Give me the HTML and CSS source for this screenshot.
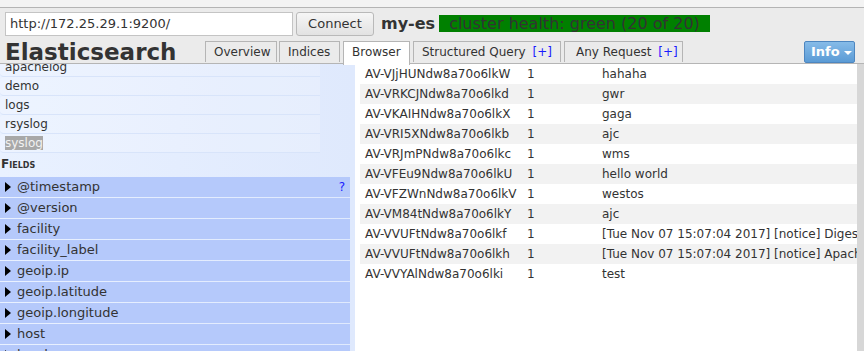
FILE: index.html
```html
<!DOCTYPE html>
<html lang="en">
<head>
  <meta charset="UTF-8">
  <link rel="stylesheet" href="styles.css">
  <title>Elasticsearch head</title>
</head>
<body>
  <div class="topstrip"></div>

  <!-- 상단 연결 바 -->
  <div class="header">
    <div class="connect-row">
      <input class="url" type="text" value="http://172.25.29.1:9200/">
      <button class="connect">Connect</button>
      <span class="cluster-name">my-es</span>
      <span class="health">cluster health: green (20 of 20)</span>
    </div>
    <div class="tab-row">
      <h1 class="logo">Elasticsearch</h1>
      <div class="tabs">
        <div class="tab tab-overview">Overview</div>
        <div class="tab tab-indices">Indices</div>
        <div class="tab tab-browser active">Browser</div>
        <div class="tab tab-query">Structured Query <span class="plus">[+]</span></div>
        <div class="tab tab-request">Any Request <span class="plus">[+]</span></div>
      </div>
      <div class="info">Info <span class="caret"></span></div>
    </div>
  </div>

  <div class="main">
    <!-- 왼쪽 인덱스 / 필드 목록 -->
    <div class="side">
      <div class="side-inner">
        <div class="idx">apachelog</div>
        <div class="idx">demo</div>
        <div class="idx">logs</div>
        <div class="idx">rsyslog</div>
        <div class="idx"><span class="sel">syslog</span></div>
        <div class="fields-title">Fields</div>
        <div class="field"><span class="tri"></span>@timestamp<span class="help">?</span></div>
        <div class="field"><span class="tri"></span>@version</div>
        <div class="field"><span class="tri"></span>facility</div>
        <div class="field"><span class="tri"></span>facility_label</div>
        <div class="field"><span class="tri"></span>geoip.ip</div>
        <div class="field"><span class="tri"></span>geoip.latitude</div>
        <div class="field"><span class="tri"></span>geoip.longitude</div>
        <div class="field"><span class="tri"></span>host</div>
        <div class="field"><span class="tri"></span>level</div>
      </div>
    </div>

    <!-- 문서 결과 목록 -->
    <div class="results">
      <div class="doc"><span class="c-id">AV-VJjHUNdw8a70o6lkW</span><span class="c-ver">1</span><span>hahaha</span></div>
      <div class="doc"><span class="c-id">AV-VRKCJNdw8a70o6lkd</span><span class="c-ver">1</span><span>gwr</span></div>
      <div class="doc"><span class="c-id">AV-VKAIHNdw8a70o6lkX</span><span class="c-ver">1</span><span>gaga</span></div>
      <div class="doc"><span class="c-id">AV-VRI5XNdw8a70o6lkb</span><span class="c-ver">1</span><span>ajc</span></div>
      <div class="doc"><span class="c-id">AV-VRJmPNdw8a70o6lkc</span><span class="c-ver">1</span><span>wms</span></div>
      <div class="doc"><span class="c-id">AV-VFEu9Ndw8a70o6lkU</span><span class="c-ver">1</span><span>hello world</span></div>
      <div class="doc"><span class="c-id">AV-VFZWnNdw8a70o6lkV</span><span class="c-ver">1</span><span>westos</span></div>
      <div class="doc"><span class="c-id">AV-VM84tNdw8a70o6lkY</span><span class="c-ver">1</span><span>ajc</span></div>
      <div class="doc"><span class="c-id">AV-VVUFtNdw8a70o6lkf</span><span class="c-ver">1</span><span>[Tue Nov 07 15:07:04 2017] [notice] Digest: generating secret for digest authentication ...</span></div>
      <div class="doc"><span class="c-id">AV-VVUFtNdw8a70o6lkh</span><span class="c-ver">1</span><span>[Tue Nov 07 15:07:04 2017] [notice] Apache/2.2.15 (Unix) DAV/2 configured</span></div>
      <div class="doc"><span class="c-id">AV-VVYAlNdw8a70o6lki</span><span class="c-ver">1</span><span>test</span></div>
    </div>
    <div class="scrollbar"></div>
  </div>
</body>
</html>
```

FILE: styles.css
```css
body {
  margin: 0;
  font-family: "DejaVu Sans", Verdana, sans-serif;
  color: #333;
  height: 351px;
  overflow: hidden;
  background: #ebebeb;
}

.topstrip {
  height: 7px;
  background: #f3f3f3;
  border-bottom: 1px solid #b4b4b4;
}

.header {
  background: #ebebeb;
}

.connect-row {
  display: flex;
  align-items: center;
  height: 31px;
  padding-left: 5px;
}

.url {
  box-sizing: border-box;
  width: 288px;
  height: 24px;
  margin: 0;
  padding: 0 4px;
  border: 1px solid #c4c4c4;
  font-family: "DejaVu Sans", sans-serif;
  font-size: 13px;
  color: #333;
  background: #fff;
}

.connect {
  box-sizing: border-box;
  width: 78px;
  height: 24px;
  margin: 0 0 0 3px;
  border: 1px solid #b9b9b9;
  border-radius: 3px;
  background: linear-gradient(#f6f6f6, #e2e2e2);
  font-family: "DejaVu Sans", sans-serif;
  font-size: 13px;
  color: #333;
}

.cluster-name {
  margin-left: 7px;
  font-size: 16px;
  font-weight: bold;
  color: #333;
}

.health {
  margin-left: 4px;
  background: #008000;
  color: #333;
  font-size: 16px;
  line-height: 17px;
  padding: 0 10px 0 10px;
}

.tab-row {
  display: flex;
  align-items: flex-end;
  height: 24px;
  position: relative;
}

.logo {
  margin: 0 0 0 5px;
  font-size: 23px;
  line-height: 26px;
  font-weight: bold;
  color: #333;
  width: 200px;
  flex: none;
  position: relative;
  top: 2px;
}

.tabs {
  display: flex;
  gap: 3px;
  position: relative;
  top: -1px;
}

.tab {
  box-sizing: border-box;
  height: 21px;
  padding: 0 0 0 8px;
  border: 1px solid #b5b5b5;
  border-bottom: none;
  font-size: 12px;
  line-height: 20px;
  color: #333;
  background: #ebebeb;
  white-space: nowrap;
}

.tab-overview { width: 72px; margin-right: -1px; }
.tab-indices { width: 61px; }
.tab-browser { width: 67px; }
.tab-query { width: 148px; }
.tab-request { width: 119px; padding-left: 11px; }

.tab.active {
  background: #fff;
  height: 24px;
  margin-bottom: -3px;
  position: relative;
}

.plus {
  color: #1a1aff;
  margin-left: 3px;
}

.info {
  position: absolute;
  right: 9px;
  top: 2px;
  box-sizing: border-box;
  width: 51px;
  height: 22px;
  border: 1px solid #4d86c0;
  border-radius: 2px;
  background: linear-gradient(#86bbe8, #5b9bd5);
  color: #fff;
  font-size: 13px;
  font-weight: bold;
  line-height: 20px;
  padding-left: 6px;
  white-space: nowrap;
}

.caret {
  display: inline-block;
  width: 0;
  height: 0;
  border-left: 4px solid transparent;
  border-right: 4px solid transparent;
  border-top: 4px solid #fff;
  vertical-align: middle;
  margin-left: 0;
}

.main {
  display: flex;
  height: 288px;
  border-top: 1px solid #b5b5b5;
  background: #fff;
}

.side {
  width: 355px;
  flex: none;
  overflow: hidden;
  background: linear-gradient(90deg, #e9f1ff, #dfe9fd);
}

.side-inner {
  margin-top: -6px;
}

.idx {
  height: 18px;
  line-height: 18px;
  margin-right: 35px;
  padding-left: 5px;
  font-size: 12px;
  color: #333;
  border-bottom: 1px solid #d8e4fa;
  border-radius: 4px 0 0 4px;
  background: rgba(255, 255, 255, 0.2);
}

.sel {
  background: #a8a8a8;
  color: #f2f2f2;
}

.fields-title {
  height: 22px;
  line-height: 22px;
  padding-left: 1px;
  font-weight: bold;
  font-variant: small-caps;
  font-size: 12px;
  color: #333;
  margin-bottom: 2px;
}

.field {
  position: relative;
  height: 20px;
  line-height: 20px;
  margin-right: 5px;
  margin-bottom: 1px;
  padding-left: 17px;
  font-size: 13px;
  color: #333;
  background: #b5c9fb;
}

.tri {
  position: absolute;
  left: 5px;
  top: 5px;
  width: 0;
  height: 0;
  border-top: 5px solid transparent;
  border-bottom: 5px solid transparent;
  border-left: 6px solid #000;
}

.help {
  position: absolute;
  right: 5px;
  top: 0;
  color: #1a1aff;
  font-size: 12px;
}

.results {
  flex: 1;
  overflow: hidden;
  padding: 0 0 0 5px;
}

.doc {
  display: flex;
  height: 20px;
  line-height: 20px;
  white-space: nowrap;
  font-size: 12px;
  color: #333;
}

.doc:nth-child(even) {
  background: #f2f2f2;
}

.doc span {
  flex: none;
}

.c-id {
  width: 157px;
  padding-left: 5px;
}

.c-ver {
  width: 75px;
  padding-left: 5px;
}

.scrollbar {
  width: 7px;
  flex: none;
  background: #d7d7d7;
}
```
